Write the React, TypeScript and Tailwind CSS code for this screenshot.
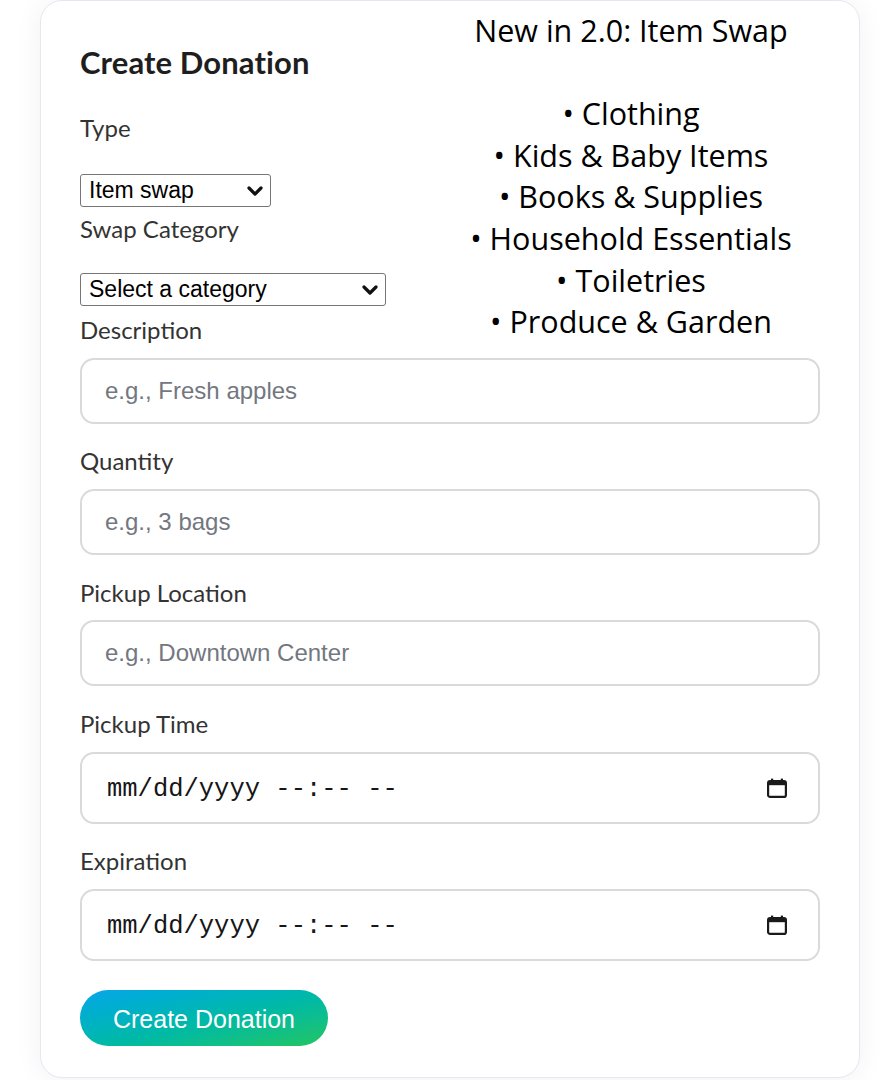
import React from "react";

const Chevron = () => (
  <svg width="16" height="10" viewBox="0 0 16 10" className="shrink-0">
    <path d="M2 2 L8 8 L14 2" fill="none" stroke="#111" strokeWidth="3.2" strokeLinecap="round" strokeLinejoin="round" />
  </svg>
);

const CalendarIcon = () => (
  <svg width="22" height="22" viewBox="0 0 22 22" className="shrink-0">
    <rect x="2.1" y="4.1" width="17.8" height="15.8" rx="2" fill="none" stroke="#1a1a1a" strokeWidth="2.2" />
    <rect x="2" y="4" width="18" height="4.2" fill="#1a1a1a" />
    <rect x="5" y="1.6" width="2.2" height="4" fill="#1a1a1a" />
    <rect x="14.8" y="1.6" width="2.2" height="4" fill="#1a1a1a" />
  </svg>
);

const labelCls =
  "block text-[24px] leading-[30px] text-[#333] font-['Lato','Open_Sans',sans-serif]";

const FakeSelect = ({ text, width }: { text: string; width: string }) => (
  <div
    className={`${width} h-[33px] flex items-center justify-between pl-[8px] pr-[7px] border-[1.5px] border-[#767676] rounded-[3px] bg-white text-[23px] text-black font-['Liberation_Sans',Arial,sans-serif]`}
  >
    <span className="leading-none">{text}</span>
    <Chevron />
  </div>
);

const TextInput = ({ placeholder }: { placeholder: string }) => (
  <input
    type="text"
    placeholder={placeholder}
    className="block w-full h-[66px] px-[23px] border-2 border-[#dadada] rounded-[14px] bg-white text-[24px] text-black placeholder:text-[#73777f] font-['Liberation_Sans',Arial,sans-serif] outline-none"
  />
);

const DateInput = () => (
  <div className="w-full h-[72px] flex items-center justify-between pl-[25px] pr-[30px] border-2 border-[#dadada] rounded-[14px] bg-white">
    <span className="pt-[5px] text-[25.5px] text-[#161616] font-['Liberation_Mono','DejaVu_Sans_Mono',monospace] whitespace-pre">
      mm/dd/yyyy --:-- --
    </span>
    <CalendarIcon />
  </div>
);

export default function App() {
  return (
    <div className="relative w-[895px] h-[1080px] overflow-hidden bg-white">
      <div className="ml-[40px] w-[820px] h-[1078px] border border-[#e3e8f1] rounded-[22px] bg-white shadow-[0_2px_28px_rgba(15,23,42,0.06)] pt-[41px] px-[39px]">
        <h2 className="text-[31px] leading-[40px] font-bold text-[#1e1e1e] font-['Lato','Open_Sans',sans-serif] tracking-[0.1px]">
          Create Donation
        </h2>

        <label className={`${labelCls} mt-[31px]`}>Type</label>
        <div className="mt-[31px]">
          <FakeSelect text="Item swap" width="w-[191px]" />
        </div>

        <label className={`${labelCls} mt-[7px]`}>Swap Category</label>
        <div className="mt-[29px]">
          <FakeSelect text="Select a category" width="w-[306px]" />
        </div>

        <label className={`${labelCls} mt-[9px]`}>Description</label>
        <div className="mt-[13px]">
          <TextInput placeholder="e.g., Fresh apples" />
        </div>

        <label className={`${labelCls} mt-[22px]`}>Quantity</label>
        <div className="mt-[13px]">
          <TextInput placeholder="e.g., 3 bags" />
        </div>

        <label className={`${labelCls} mt-[23px]`}>Pickup Location</label>
        <div className="mt-[12px]">
          <TextInput placeholder="e.g., Downtown Center" />
        </div>

        <label className={`${labelCls} mt-[23px]`}>Pickup Time</label>
        <div className="mt-[13px]">
          <DateInput />
        </div>

        <label className={`${labelCls} mt-[22px]`}>Expiration</label>
        <div className="mt-[13px]">
          <DateInput />
        </div>

        <button className="mt-[29px] w-[248px] h-[56px] pt-[3px] rounded-full bg-linear-to-br from-[#0ea5e9] to-[#22c55e] text-white text-[25px] font-['Liberation_Sans',Arial,sans-serif] flex items-center justify-center">
          Create Donation
        </button>
      </div>

      <div className="absolute left-[431px] top-[10px] w-[400px] text-center text-black text-[30.5px] leading-[41.6px] font-['Open_Sans',sans-serif]">
        <div>New in 2.0: Item Swap</div>
        <div>&nbsp;</div>
        <div>• Clothing</div>
        <div>• Kids &amp; Baby Items</div>
        <div>• Books &amp; Supplies</div>
        <div>• Household Essentials</div>
        <div>• Toiletries</div>
        <div>• Produce &amp; Garden</div>
      </div>
    </div>
  );
}
